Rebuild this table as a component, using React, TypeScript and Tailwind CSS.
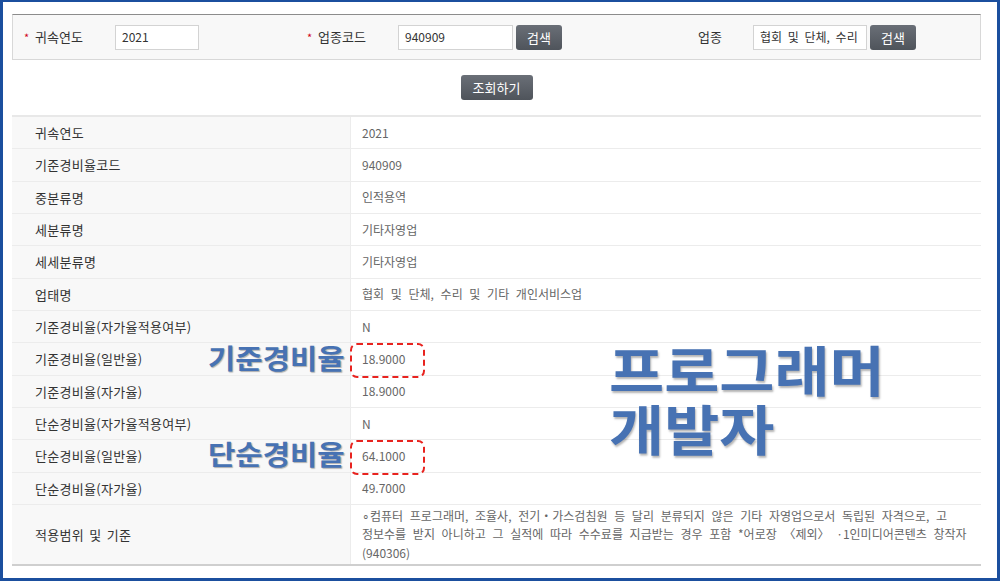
import type { ReactNode } from "react";

const FONT = '"Noto Sans CJK KR", "Noto Sans", "Liberation Sans", sans-serif';

type Row = { label: string; value: ReactNode };

const ROWS: Row[] = [
  { label: "귀속연도", value: "2021" },
  { label: "기준경비율코드", value: "940909" },
  { label: "중분류명", value: "인적용역" },
  { label: "세분류명", value: "기타자영업" },
  { label: "세세분류명", value: "기타자영업" },
  { label: "업태명", value: "협회 및 단체, 수리 및 기타 개인서비스업" },
  { label: "기준경비율(자가율적용여부)", value: "N" },
  { label: "기준경비율(일반율)", value: "18.9000" },
  { label: "기준경비율(자가율)", value: "18.9000" },
  { label: "단순경비율(자가율적용여부)", value: "N" },
  { label: "단순경비율(일반율)", value: "64.1000" },
  { label: "단순경비율(자가율)", value: "49.7000" },
];

function Star() {
  return <span className="text-[#d0021b] text-[11px] w-[11px] leading-none">*</span>;
}

function DarkButton({ children, className = "" }: { children: ReactNode; className?: string }) {
  return (
    <button
      type="button"
      className={`h-[25px] rounded-[3px] bg-gradient-to-b from-[#6a6f77] to-[#4f545b] text-white text-[13px] leading-none ${className}`}
    >
      {children}
    </button>
  );
}

function TextInput({ value, className = "" }: { value: string; className?: string }) {
  return (
    <div
      className={`h-[25px] border border-[#d3d3d3] bg-white pl-[6px] flex items-center text-[12px] text-[#333] overflow-hidden whitespace-nowrap [word-spacing:3px] ${className}`}
    >
      {value}
    </div>
  );
}

export default function App() {
  return (
    <div
      className="w-[1000px] h-[581px] bg-white border-t-2 border-l-[3px] border-r-[3px] border-b-[3px] border-[#1b4f9e] pl-[9px] pt-[12px] overflow-hidden"
      style={{ fontFamily: FONT }}
    >
      <div className="w-[969px]">
        {/* search box */}
        <div className="h-[46px] bg-[#f8f8f8] border border-[#d8d8d8] border-t-[#8c8c8c] flex items-center text-[13px] text-[#333]">
          <div className="pl-[11px] flex items-center">
            <Star />
            <span className="w-[80px]">귀속연도</span>
            <TextInput value="2021" className="w-[84px]" />
          </div>
          <div className="ml-[108px] flex items-center">
            <Star />
            <span className="w-[80px]">업종코드</span>
            <TextInput value="940909" className="w-[115px]" />
            <DarkButton className="ml-[3px] w-[46px]">검색</DarkButton>
          </div>
          <div className="ml-[136px] flex items-center">
            <span className="w-[55px]">업종</span>
            <TextInput value="협회 및 단체, 수리" className="w-[114px]" />
            <DarkButton className="ml-[3px] w-[46px]">검색</DarkButton>
          </div>
        </div>

        <div className="flex justify-center mt-[15px]">
          <DarkButton className="w-[72px]">조회하기</DarkButton>
        </div>

        {/* result table */}
        <div className="relative mt-[15px] border-t-2 border-[#e8e8e8] text-[12px]">
          {ROWS.map((r) => (
            <div key={r.label} className="flex h-[32.33px] border-b border-[#ececec]">
              <div className="w-[338px] bg-[#f8f8f8] pl-[23px] flex items-center text-[13px] text-[#333] tracking-[0.3px]">
                {r.label}
              </div>
              <div className="flex-1 border-l border-[#ececec] pl-[11px] flex items-center text-[#666] [word-spacing:4px]">
                {r.value}
              </div>
            </div>
          ))}
          <div className="flex h-[61px] border-b-2 border-[#cfcfcf]">
            <div className="w-[338px] bg-[#f8f8f8] pl-[23px] flex items-center text-[13px] text-[#333] tracking-[0.3px] [word-spacing:2px]">
              적용범위 및 기준
            </div>
            <div className="flex-1 border-l border-[#ececec] pl-[11px] flex items-center text-[#666] leading-[18.5px] whitespace-nowrap [word-spacing:4px]">
              <p>
                ∘컴퓨터 프로그래머, 조율사, 전기・가스검침원 등 달리 분류되지 않은 기타 자영업으로서 독립된 자격으로, 고
                <br />
                정보수를 받지 아니하고 그 실적에 따라 수수료를 지급받는 경우 포함 *어로장 〈제외〉 ·1인미디어콘텐츠 창작자
                <br />
                (940306)
              </p>
            </div>
          </div>

          {/* annotations drawn over the table */}
          <span className="absolute left-[196px] top-[227px] origin-left scale-x-[1.1] text-[27px] font-bold leading-none text-[#4772b3] [text-shadow:1px_1px_1px_rgba(0,0,0,0.3)]">
            기준경비율
          </span>
          <span className="absolute left-[196px] top-[323px] origin-left scale-x-[1.1] text-[27px] font-bold leading-none text-[#4772b3] [text-shadow:1px_1px_1px_rgba(0,0,0,0.3)]">
            단순경비율
          </span>
          <div className="absolute left-[338px] top-[226px] w-[75px] h-[35px] rounded-[7px] border-2 border-dashed border-[#e8231f]" />
          <div className="absolute left-[338px] top-[323px] w-[75px] h-[35px] rounded-[7px] border-2 border-dashed border-[#e8231f]" />
          <div className="absolute left-[597px] top-[222px] origin-left scale-x-[1.11] text-[54px] font-bold leading-[59px] text-[#4772b3] [text-shadow:1px_2px_2px_rgba(0,0,0,0.3)]">
            프로그래머
            <br />
            개발자
          </div>
        </div>
      </div>
    </div>
  );
}
